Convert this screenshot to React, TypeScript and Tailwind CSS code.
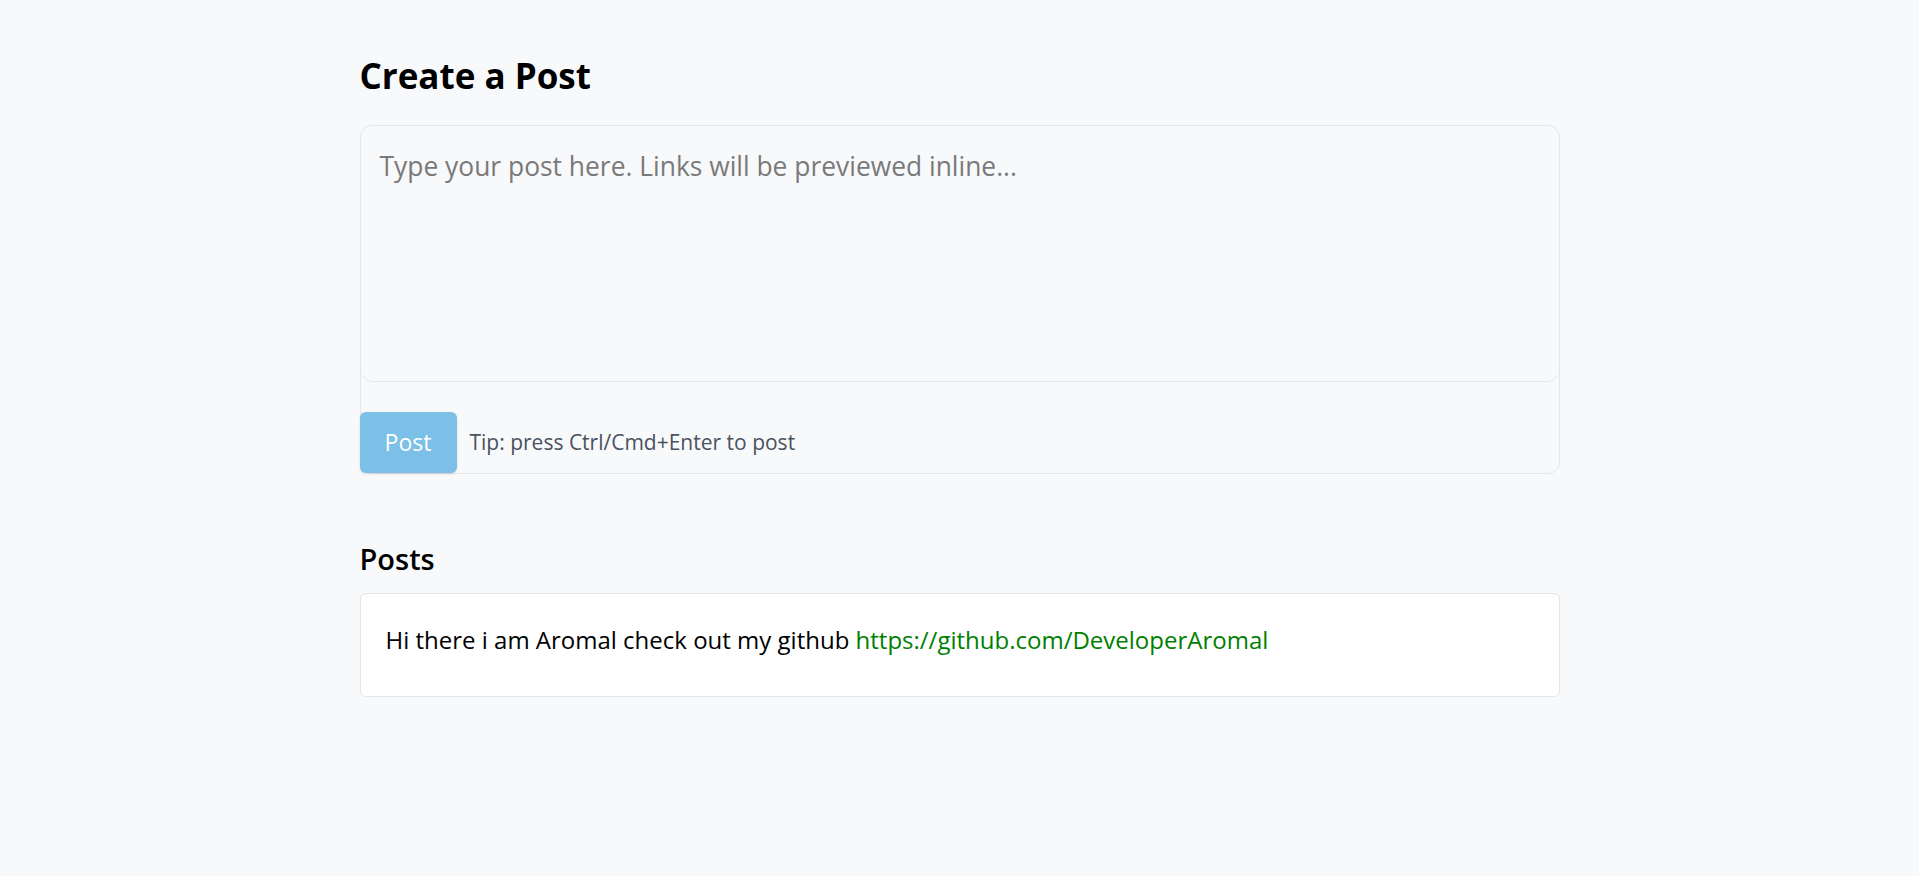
import { useState } from 'react'

const font = { fontFamily: '"Open Sans", "Noto Sans", sans-serif' }

interface Post {
    id: number
    text: string
}

function renderText(text: string) {
    const parts = text.split(/(https?:\/\/\S+)/g)
    return parts.map((part, i) =>
        /^https?:\/\//.test(part) ? (
            <a key={i} href={part} className="text-[#008000]">
                {part}
            </a>
        ) : (
            <span key={i}>{part}</span>
        )
    )
}

export default function App() {
    const [draft, setDraft] = useState('')
    const [posts, setPosts] = useState<Post[]>([
        { id: 1, text: 'Hi there i am Aromal check out my github https://github.com/DeveloperAromal' },
    ])

    const submit = () => {
        if (!draft.trim()) return
        setPosts([{ id: Date.now(), text: draft.trim() }, ...posts])
        setDraft('')
    }

    return (
        <div className="min-h-screen bg-[#f8f9fb] text-black" style={font}>
            <div className="max-w-[1200px] mx-auto pt-[55px]">
                <h1 className="text-[35px] font-bold leading-[1.2] mb-[28px]">Create a Post</h1>

                {/* Composer */}
                <div className="border border-[#e3e5e8] rounded-xl">
                    <textarea
                        value={draft}
                        onChange={(e) => setDraft(e.target.value)}
                        onKeyDown={(e) => {
                            if ((e.ctrlKey || e.metaKey) && e.key === 'Enter') submit()
                        }}
                        placeholder="Type your post here. Links will be previewed inline..."
                        className="block w-full h-[257px] -mt-px border-b border-[#e3e5e8] rounded-xl bg-transparent px-[19px] pt-[22px] pb-[16px] text-[26.4px] leading-[1.5] placeholder-[#7a7a7a] resize-none outline-none"
                    />
                    <div className="flex items-center gap-[13px] mt-[30px] -ml-px">
                        <button
                            onClick={submit}
                            className="w-[97px] h-[61px] rounded-md bg-[#7cbfe7] text-white text-[23px] shadow-sm"
                        >
                            Post
                        </button>
                        <span className="text-[21px] text-[#4a5160]">Tip: press Ctrl/Cmd+Enter to post</span>
                    </div>
                </div>

                {/* Posts */}
                <h2 className="text-[29px] font-semibold leading-[1.2] mt-[68px] mb-[16px]">Posts</h2>
                <div className="flex flex-col gap-4">
                    {posts.map((p) => (
                        <div key={p.id} className="bg-white border border-[#e3e5e8] rounded-md px-[25px] pt-[28px] h-[104px]">
                            <p className="text-[24px] leading-[1.5]">{renderText(p.text)}</p>
                        </div>
                    ))}
                </div>
            </div>
        </div>
    )
}
